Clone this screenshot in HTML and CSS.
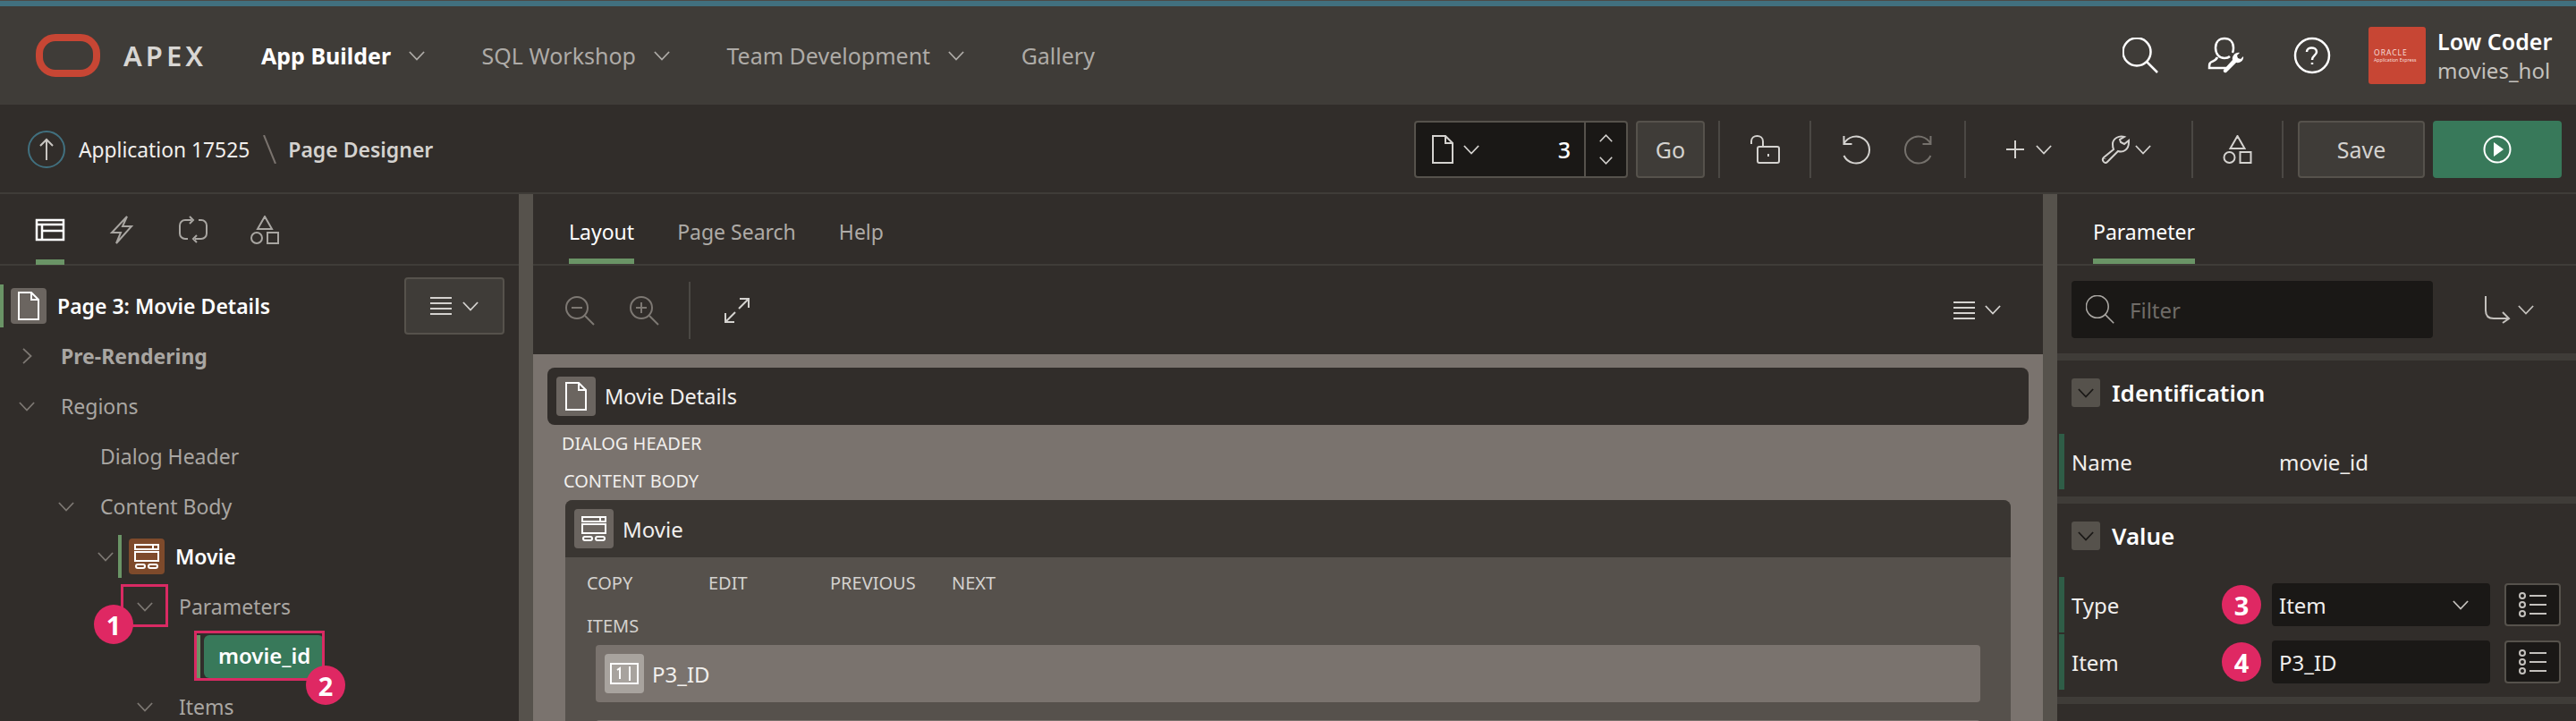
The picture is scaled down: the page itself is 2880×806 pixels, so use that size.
FILE: index.html
```html
<!DOCTYPE html>
<html lang="en">
<head>
    <meta charset="UTF-8">
    <meta name="viewport" content="width=device-width, initial-scale=1.0">
    <title>Page Designer</title>
    <link rel="stylesheet" href="styles.css">
</head>
<body>

<!-- shared icons -->
<svg class="sprite" aria-hidden="true">
    <symbol id="chev" viewBox="0 0 20 12"><path d="M1 1l9 9.500 9-9.500"/></symbol>
    <symbol id="chev-r" viewBox="0 0 12 20"><path d="M1 1l9.500 9-9.500 9"/></symbol>
    <symbol id="page" viewBox="0 0 24 32"><path d="M1 1h14l8 8v22H1zM15 1v8h8"/></symbol>
    <symbol id="shapes" viewBox="0 0 32 32"><path d="M16 1l8 14H8zM1 25a6 6 0 1 0 12 0a6 6 0 1 0-12 0zM19 19h12v12H19z"/></symbol>
    <symbol id="search" viewBox="0 0 40 40"><circle cx="16" cy="16" r="15.500"/><path d="M27 27l12 12"/></symbol>
    <symbol id="menu" viewBox="0 0 24 20"><path d="M0 1h24M0 7h24M0 13h24M0 19h24"/></symbol>
    <symbol id="region" viewBox="0 0 28 28"><path d="M1 1h26v5H1zM21 1v5M1 9h26v10H1zM4 23h6a2 2 0 0 1 0 4H4a2 2 0 0 1 0-4zM18 23h6a2 2 0 0 1 0 4h-6a2 2 0 0 1 0-4z"/></symbol>
    <symbol id="opts" viewBox="0 0 32 28"><circle cx="4" cy="4" r="3"/><circle cx="4" cy="14" r="3"/><circle cx="4" cy="24" r="3"/><path d="M12 4h19M12 14h19M12 24h19"/></symbol>
</svg>

<div class="topline"></div>

<header class="header">
    <svg class="logo" viewBox="0 0 72 48"><rect x="4" y="4" width="64" height="40" rx="18"/></svg>
    <span class="brand">APEX</span>
    <nav class="nav">
        <a class="nav-item active">App Builder <svg class="ico chev"><use href="#chev"/></svg></a>
        <a class="nav-item">SQL Workshop <svg class="ico chev"><use href="#chev"/></svg></a>
        <a class="nav-item">Team Development <svg class="ico chev"><use href="#chev"/></svg></a>
        <a class="nav-item">Gallery</a>
    </nav>
    <div class="head-icons">
        <svg class="ico head-ico"><use href="#search"/></svg>
        <svg class="ico head-ico" viewBox="0 0 40 40">
            <path d="M24 21c-1 1-3 2-6 2c-6 0-10-5-10-11.500C8 5 12 1 18 1s10 4 10 10.500c0 2-.3 4-1 5.500M10 22c-1 3-4 4-7 5.500C1 28.500 1 30 1 34h19"/>
            <path class="solid" d="M35 17l-3 3 1 3 3 1 3-3c1 4-3 8-8 7L20 39c-2 1-4-1-3-3L27 25c-1-4 3-9 8-8z"/>
        </svg>
        <svg class="ico head-ico" viewBox="0 0 40 40"><circle cx="20" cy="20" r="19"/><path d="M14 16c0-6 11-6 11 0c0 4-5 4-5 9M20 28v2"/></svg>
    </div>
    <div class="user">
        <div class="user-tile"><b>ORACLE</b><span>Application Express</span></div>
        <div class="user-text">
            <div class="user-name">Low Coder</div>
            <div class="user-app">movies_hol</div>
        </div>
    </div>
</header>

<div class="crumbbar">
    <svg class="up" viewBox="0 0 42 44"><circle cx="21" cy="22" r="20"/><path class="up-arrow" d="M21 34V11M14 18l7-7 7 7"/></svg>
    <span class="crumb">Application 17525</span>
    <svg class="slash" viewBox="0 0 15 32"><path d="M1 0l13 32"/></svg>
    <span class="crumb strong">Page Designer</span>

    <div class="tools">
        <div class="page-box">
            <svg class="ico page-ico"><use href="#page"/></svg>
            <svg class="ico chev"><use href="#chev"/></svg>
            <span class="page-no">3</span>
            <div class="spin">
                <svg class="ico spin-ico flip"><use href="#chev"/></svg>
                <svg class="ico spin-ico"><use href="#chev"/></svg>
            </div>
        </div>
        <button class="btn go">Go</button>
        <div class="sep"></div>
        <svg class="ico lock" viewBox="0 0 32 32"><path d="M1 10V7c0-8 13-8 13 0v5M10 13h20a2 2 0 0 1 2 2v14a2 2 0 0 1-2 2H10a2 2 0 0 1-2-2V15a2 2 0 0 1 2-2zM20 21v3"/></svg>
        <div class="sep"></div>
        <svg class="ico undo" viewBox="0 0 30 32"><path d="M1.500 1v9h9M1.500 10A15 15 0 1 1 1.500 23"/></svg>
        <svg class="ico undo dim" viewBox="0 0 30 32"><path d="M28.500 1v9h-9M28.500 10A15 15 0 1 0 28.500 23"/></svg>
        <div class="sep"></div>
        <svg class="ico plus" viewBox="0 0 20 20"><path d="M10 0v20M0 10h20"/></svg>
        <svg class="ico chev"><use href="#chev"/></svg>
        <svg class="ico wrench" viewBox="0 0 32 32"><path d="M26 2c-6-2-13 2-13 8c0 2 0 4 1 6L3 25c-3 3 1 8 4 5L19 18c6 2 12-2 12-10V6l-5 4-4-2-1-3zM4.500 26.500v.5"/></svg>
        <svg class="ico chev"><use href="#chev"/></svg>
        <div class="sep"></div>
        <svg class="ico shapes"><use href="#shapes"/></svg>
        <div class="sep"></div>
        <button class="btn save">Save</button>
        <button class="btn run">
            <svg class="run-ico" viewBox="0 0 32 32"><circle cx="16" cy="16" r="14.500"/><path d="M12 8l11 8-11 8z"/></svg>
        </button>
    </div>
</div>

<main class="main">
    <section class="left">
        <div class="tabs icon-tabs">
            <div class="icon-tab on">
                <svg class="ico tab-ico grid" viewBox="0 0 32 24"><path d="M1 1h30v22H1zM1 6h30M7 6v17M7 13h24"/></svg>
            </div>
            <div class="icon-tab">
                <svg class="ico tab-ico bolt" viewBox="0 0 24 32"><path d="M18 1L1 19h10L6 31 23 12H13z"/></svg>
            </div>
            <div class="icon-tab">
                <svg class="ico tab-ico" viewBox="0 0 32 32"><path d="M14 5H7a6 6 0 0 0-6 6v9a6 6 0 0 0 6 6h3M18 26h7a6 6 0 0 0 6-6v-9a6 6 0 0 0-6-6h-3M12 1l4 4-4 4M20 22l-4 4 4 4"/></svg>
            </div>
            <div class="icon-tab">
                <svg class="ico tab-ico"><use href="#shapes"/></svg>
            </div>
        </div>

        <div class="tree">
            <div class="row root">
                <div class="bar"></div>
                <div class="tile"><svg class="ico tile-ico"><use href="#page"/></svg></div>
                <span class="node strong white">Page 3: Movie Details</span>
                <button class="btn tree-menu">
                    <svg class="ico menu-ico"><use href="#menu"/></svg>
                    <svg class="ico chev"><use href="#chev"/></svg>
                </button>
            </div>
            <div class="row d0"><span class="twist"><svg class="ico chev-r"><use href="#chev-r"/></svg></span><span class="node bold">Pre-Rendering</span></div>
            <div class="row d0"><span class="twist"><svg class="ico chev"><use href="#chev"/></svg></span><span class="node">Regions</span></div>
            <div class="row d1"><span class="twist"></span><span class="node">Dialog Header</span></div>
            <div class="row d1"><span class="twist"><svg class="ico chev"><use href="#chev"/></svg></span><span class="node">Content Body</span></div>
            <div class="row d2">
                <span class="twist narrow"><svg class="ico chev"><use href="#chev"/></svg></span>
                <div class="bar"></div>
                <div class="tile brown"><svg class="ico tile-ico region"><use href="#region"/></svg></div>
                <span class="node strong white">Movie</span>
            </div>
            <div class="row d3"><span class="twist"><svg class="ico chev"><use href="#chev"/></svg></span><span class="node">Parameters</span></div>
            <div class="row sel-row">
                <div class="bar short"></div>
                <div class="pill">movie_id</div>
            </div>
            <div class="row d3"><span class="twist"><svg class="ico chev"><use href="#chev"/></svg></span><span class="node">Items</span></div>
        </div>

        <!-- callouts over the tree -->
        <div class="mark mark-1"></div>
        <div class="mark mark-2"></div>
        <div class="badge badge-1">1</div>
        <div class="badge badge-2">2</div>
    </section>

    <div class="split"></div>

    <section class="center">
        <div class="tabs text-tabs">
            <div class="text-tab on">Layout</div>
            <div class="text-tab">Page Search</div>
            <div class="text-tab">Help</div>
        </div>
        <div class="canvas-bar">
            <svg class="ico zoom" viewBox="0 0 32 32"><circle cx="13" cy="13" r="12"/><path d="M22 22l10 10M7 13h12"/></svg>
            <svg class="ico zoom" viewBox="0 0 32 32"><circle cx="13" cy="13" r="12"/><path d="M22 22l10 10M7 13h12M13 7v12"/></svg>
            <div class="sep"></div>
            <svg class="ico expand" viewBox="0 0 28 28"><path d="M17 1h10v10M27 1L16 12M11 27H1V17M1 27l11-11"/></svg>
            <div class="bar-end">
                <svg class="ico menu-ico"><use href="#menu"/></svg>
                <svg class="ico chev"><use href="#chev"/></svg>
            </div>
        </div>
        <div class="canvas">
            <div class="page-head">
                <div class="tile tile-sm"><svg class="ico tile-ico"><use href="#page"/></svg></div>
                <span>Movie Details</span>
            </div>
            <div class="slot slot-a">DIALOG HEADER</div>
            <div class="slot slot-b">CONTENT BODY</div>
            <div class="card">
                <div class="card-head">
                    <div class="tile tile-sm"><svg class="ico tile-ico region"><use href="#region"/></svg></div>
                    <span>Movie</span>
                </div>
                <div class="actions">
                    <span>COPY</span><span>EDIT</span><span>PREVIOUS</span><span>NEXT</span>
                </div>
                <div class="items-label">ITEMS</div>
                <div class="item">
                    <div class="tile tile-sm tile-light">
                        <svg class="ico tile-ico field" viewBox="0 0 32 24"><path d="M1 1h30v22H1zM22 4v16M8 8l3-2v12"/></svg>
                    </div>
                    <span>P3_ID</span>
                </div>
                <div class="item"></div>
            </div>
        </div>
    </section>

    <div class="split"></div>

    <section class="right">
        <div class="tabs text-tabs prop-tabs">
            <div class="text-tab on">Parameter</div>
        </div>
        <div class="filter-bar">
            <div class="filter">
                <svg class="ico filter-ico"><use href="#search"/></svg>
                <span>Filter</span>
            </div>
            <svg class="ico goto" viewBox="0 0 28 32"><path d="M1 1v16c0 7 4 9 9 9h17M20 19l7 7-7 5"/></svg>
            <svg class="ico chev"><use href="#chev"/></svg>
        </div>
        <div class="group">
            <div class="group-head">
                <span class="toggle"><svg class="ico chev"><use href="#chev"/></svg></span>
                <h2>Identification</h2>
            </div>
            <div class="prop">
                <div class="prop-bar"></div>
                <span class="prop-label">Name</span>
                <span class="prop-value">movie_id</span>
            </div>
        </div>
        <div class="group">
            <div class="group-head">
                <span class="toggle"><svg class="ico chev"><use href="#chev"/></svg></span>
                <h2>Value</h2>
            </div>
            <div class="prop">
                <div class="prop-bar"></div>
                <span class="prop-label short">Type</span>
                <div class="badge inline">3</div>
                <div class="field-box">Item <svg class="ico chev"><use href="#chev"/></svg></div>
                <div class="opts"><svg class="ico opts-ico"><use href="#opts"/></svg></div>
            </div>
            <div class="prop">
                <div class="prop-bar"></div>
                <span class="prop-label short">Item</span>
                <div class="badge inline">4</div>
                <div class="field-box">P3_ID</div>
                <div class="opts"><svg class="ico opts-ico"><use href="#opts"/></svg></div>
            </div>
        </div>
        <div class="group"></div>
    </section>
</main>

</body>
</html>
```

FILE: styles.css
```css
* {
    box-sizing: border-box;
}

html, body {
    height: 100%;
}

body {
    margin: 0;
    height: 806px;
    overflow: hidden;
    background: #312d2a;
    color: #f1efed;
    font-family: "Noto Sans", sans-serif;
    font-size: 24px;
}

.sprite {
    display: none;
}

.ico {
    display: block;
    flex: none;
    fill: none;
    stroke: currentColor;
    stroke-width: 2;
    overflow: visible;
}

.chev {
    width: 18px;
    height: 11px;
}

.chev-r {
    width: 11px;
    height: 18px;
}

.strong {
    font-weight: 600;
}

.bold {
    font-weight: 700;
}

.white {
    color: #fff;
}

.topline {
    height: 7px;
    background: #41707f;
    border-top: 1px solid #4d4a46;
}

/* header */
.header {
    display: flex;
    align-items: center;
    height: 110px;
    background: #3f3c38;
    padding-left: 40px;
}

.logo {
    width: 72px;
    height: 48px;
    fill: none;
    stroke: #c74634;
    stroke-width: 8;
}

.brand {
    margin-left: 26px;
    width: 90px;
    font-size: 31px;
    font-weight: 600;
    letter-spacing: 4px;
    white-space: nowrap;
    color: #d8d6d3;
}

.nav {
    display: flex;
    margin-left: 64px;
    font-size: 25px;
}

.nav-item {
    display: flex;
    align-items: center;
    gap: 20px;
    margin-right: 63.500px;
    color: #aeaba7;
}

.nav-item .chev {
    color: #aeaba7;
}

.nav-item.active {
    color: #fff;
    font-weight: 700;
}

.head-icons {
    display: flex;
    gap: 56px;
    margin-left: auto;
    color: #fff;
}

.head-ico {
    width: 40px;
    height: 40px;
    stroke-width: 2.500;
}

.solid {
    fill: currentColor;
    stroke: none;
}

.user {
    display: flex;
    align-items: center;
    margin-left: 43px;
    margin-right: 29px;
}

.user-tile {
    display: flex;
    flex-direction: column;
    justify-content: center;
    width: 64px;
    height: 64px;
    padding-left: 6px;
    background: #c74634;
    border-radius: 3px;
    color: #f6dfda;
    white-space: nowrap;
}

.user-tile b {
    font-size: 8.500px;
    font-weight: 400;
    letter-spacing: 1px;
    line-height: 9px;
}

.user-tile span {
    font-size: 5.200px;
    line-height: 8px;
}

.user-text {
    margin-left: 13px;
    width: 126px;
}

.user-name {
    color: #fff;
    font-size: 25px;
    font-weight: 600;
    line-height: 34px;
    white-space: nowrap;
}

.user-app {
    color: #c4c1bd;
    line-height: 32px;
}

/* breadcrumb and toolbar */
.crumbbar {
    display: flex;
    align-items: center;
    height: 100px;
    padding: 2px 16px 0 31px;
    border-bottom: 2px solid #3f3c38;
    font-size: 25px;
}

.up {
    width: 42px;
    height: 44px;
    fill: none;
    stroke: #41707f;
    stroke-width: 2;
}

.up-arrow {
    stroke: #c9c6c2;
}

.crumb {
    margin-left: 15px;
    font-size: 22.800px;
}

.crumb.strong {
    margin-left: 13px;
    font-size: 23px;
    color: #d4d2cf;
}

.slash {
    width: 15px;
    height: 32px;
    margin-left: 15px;
    stroke: #7a736e;
    stroke-width: 2;
}

.tools {
    display: flex;
    align-items: center;
    margin-left: auto;
    height: 64px;
    color: #d4d2cf;
}

.sep {
    flex: none;
    width: 2px;
    height: 64px;
    background: #4b4844;
}

.btn {
    font: inherit;
    color: inherit;
    background: #3f3c38;
    border: 2px solid #56524c;
    border-radius: 4px;
    cursor: pointer;
}

.page-box {
    display: flex;
    align-items: center;
    width: 239px;
    height: 64px;
    padding-left: 18px;
    background: #1a1816;
    border: 2px solid #56524c;
    border-radius: 4px;
}

.page-ico {
    width: 24px;
    height: 32px;
    margin-right: 11px;
}

.page-no {
    margin-left: auto;
    margin-right: 15px;
    color: #fff;
    font-weight: 500;
}

.spin {
    display: flex;
    flex-direction: column;
    align-items: center;
    justify-content: space-between;
    width: 47px;
    height: 100%;
    padding: 13px 0;
    border-left: 2px solid #56524c;
}

.spin-ico {
    width: 15px;
    height: 9px;
}

.flip {
    transform: rotate(180deg);
}

.go {
    width: 77px;
    height: 64px;
    margin: 0 15px 0 9px;
    padding: 0;
}

.lock {
    width: 32px;
    height: 32px;
    margin: 0 34px;
}

.undo {
    width: 30px;
    height: 32px;
    margin-left: 35px;
}

.undo.dim {
    margin: 0 36px 0 40px;
    color: #75716c;
}

.plus {
    width: 20px;
    height: 20px;
    margin-left: 45px;
    margin-right: 13px;
}

.wrench {
    width: 32px;
    height: 32px;
    margin-left: 55px;
    margin-right: 6px;
}

.wrench + .chev {
    margin-right: 45px;
}

.shapes {
    width: 33px;
    height: 32px;
    margin: 0 33px;
}

.save {
    width: 142px;
    height: 64px;
    margin-left: 16px;
}

.run {
    display: flex;
    align-items: center;
    justify-content: center;
    width: 144px;
    height: 64px;
    margin-left: 9px;
    background: #38795a;
    border: 0;
}

.run-ico {
    width: 32px;
    height: 32px;
    fill: none;
    stroke: #fff;
    stroke-width: 2;
}

.run-ico path {
    fill: #fff;
    stroke: none;
}

/* panels */
.main {
    display: flex;
    height: 589px;
    overflow: hidden;
}

.left, .right {
    position: relative;
    width: 580px;
    flex: none;
    overflow: hidden;
}

.split {
    flex: none;
    width: 16px;
    background: #56524c;
}

.center {
    flex: 1;
    min-width: 0;
    display: flex;
    flex-direction: column;
}

.tabs {
    display: flex;
    flex: none;
    height: 80px;
    border-bottom: 2px solid #3f3c38;
}

.icon-tabs {
    gap: 48px;
    padding-left: 40px;
}

.icon-tab {
    display: flex;
    align-items: center;
    justify-content: center;
    width: 32px;
    height: 79px;
    color: #a9a6a2;
}

.icon-tab.on, .text-tab.on {
    color: #fff;
    box-shadow: inset 0 -6px 0 #6a9466;
}

.tab-ico {
    width: 32px;
    height: 32px;
}

.tab-ico.grid {
    height: 24px;
    stroke-width: 2.500;
}

.tab-ico.bolt {
    width: 24px;
}

.text-tabs {
    gap: 48px;
    padding-left: 40px;
    font-size: 23px;
}

.prop-tabs {
    padding-left: 40px;
}

.text-tab {
    height: 78px;
    line-height: 84px;
    color: #aeaba7;
}

/* tree */
.tree {
    padding-top: 17px;
    font-size: 23px;
}

.row {
    display: flex;
    align-items: center;
    height: 56px;
    white-space: nowrap;
}

.node {
    color: #a9a6a2;
}

.node.white {
    color: #fff;
}

.d0 { padding-left: 16px; }
.d1 { padding-left: 60px; }
.d2 { padding-left: 104px; }
.d3 { padding-left: 148px; }

.twist {
    display: flex;
    justify-content: center;
    flex: none;
    width: 28px;
    margin-right: 24px;
    color: #7d7873;
}

.twist.narrow {
    margin-right: 0;
}

.bar {
    flex: none;
    width: 4px;
    height: 48px;
    background: #6a9466;
}

.tile {
    display: flex;
    align-items: center;
    justify-content: center;
    flex: none;
    width: 40px;
    height: 40px;
    margin: 0 12px 0 8px;
    background: #6b6560;
    border-radius: 4px;
    color: #fff;
}

.tile.brown {
    background: #7e4a2b;
}

.tile-ico {
    width: 24px;
    height: 32px;
}

.tile-ico.region {
    width: 28px;
    height: 28px;
}

.tile-ico.field {
    width: 32px;
    height: 24px;
}

.tile-sm {
    width: 44px;
    height: 44px;
    margin: 0 10px;
}

.tile-light {
    background: #a8a39e;
}

.tree-menu {
    display: flex;
    align-items: center;
    justify-content: center;
    gap: 12px;
    width: 112px;
    height: 64px;
    margin-left: auto;
    margin-right: 16px;
    color: #d4d2cf;
}

.menu-ico {
    width: 24px;
    height: 20px;
}

.sel-row {
    padding-left: 220px;
}

.pill {
    width: 134px;
    height: 48px;
    margin-left: 4px;
    padding-left: 16px;
    line-height: 46px;
    background: #38795a;
    border-radius: 6px;
    color: #fff;
    font-size: 24px;
    font-weight: 600;
}

.mark {
    position: absolute;
    border: 3px solid #d92a63;
}

.mark-1 {
    left: 135px;
    top: 436px;
    width: 53px;
    height: 48px;
}

.mark-2 {
    left: 217px;
    top: 488px;
    width: 146px;
    height: 56px;
}

.badge {
    display: flex;
    align-items: center;
    justify-content: center;
    flex: none;
    width: 44px;
    height: 44px;
    border-radius: 50%;
    background: #df2863;
    color: #fff;
    font-size: 29px;
    font-weight: 700;
}

.badge-1, .badge-2 {
    position: absolute;
}

.badge-1 {
    left: 105px;
    top: 459px;
}

.badge-2 {
    left: 342px;
    top: 527px;
}

/* canvas */
.canvas-bar {
    display: flex;
    align-items: center;
    flex: none;
    gap: 40px;
    height: 99px;
    padding: 0 47px 0 36px;
    color: #7d7873;
}

.canvas-bar .sep {
    margin-left: -6px;
}

.zoom {
    width: 32px;
    height: 32px;
}

.expand {
    width: 28px;
    height: 28px;
    margin-left: -2px;
    color: #d4d2cf;
}

.bar-end {
    display: flex;
    align-items: center;
    gap: 11px;
    margin-left: auto;
    color: #d4d2cf;
}

.canvas {
    flex: 1;
    min-height: 0;
    overflow: hidden;
    padding: 15px 16px 0;
    background: #7a736e;
}

.page-head {
    display: flex;
    align-items: center;
    height: 64px;
    background: #312d2a;
    border-radius: 8px;
    font-size: 23.500px;
}

.slot {
    height: 42px;
    line-height: 42px;
    font-size: 20px;
}

.slot-a {
    padding-left: 16px;
}

.slot-b {
    padding-left: 18px;
}

.card {
    margin: 0 20px;
    background: #56514c;
    border-radius: 8px 8px 0 0;
}

.card-head {
    display: flex;
    align-items: center;
    height: 64px;
    background: #3a3632;
    border-radius: 8px 8px 0 0;
}

.actions {
    display: flex;
    height: 58px;
    line-height: 58px;
    padding-left: 24px;
    font-size: 20px;
    color: #d4d2cf;
}

.actions span {
    width: 136px;
}

.items-label {
    height: 40px;
    padding-left: 24px;
    line-height: 38px;
    font-size: 20px;
    color: #d4d2cf;
}

.item {
    display: flex;
    align-items: center;
    height: 64px;
    margin: 0 34px 20px;
    background: #7a736e;
    border-radius: 4px;
}

.item .tile {
    margin-right: 9px;
}

/* property editor */
.filter-bar {
    display: flex;
    align-items: center;
    height: 98px;
    padding-left: 16px;
    color: #c4c1bd;
}

.filter {
    display: flex;
    align-items: center;
    width: 404px;
    height: 64px;
    margin-right: 58px;
    padding-left: 16px;
    background: #1a1816;
    border-radius: 4px;
    color: #6f6b67;
}

.filter-ico {
    width: 32px;
    height: 32px;
    margin-right: 17px;
    color: #a9a6a2;
}

.goto {
    width: 28px;
    height: 32px;
    margin-right: 9px;
}

.group {
    border-top: 8px solid #3f3c38;
    padding-bottom: 8px;
}

.group-head {
    display: flex;
    align-items: center;
    height: 82px;
    padding: 0 16px 10px;
}

.group-head h2 {
    margin: 0 0 0 13px;
    font-size: 26px;
    font-weight: 600;
    color: #fff;
}

.toggle {
    display: flex;
    align-items: center;
    justify-content: center;
    width: 32px;
    height: 32px;
    background: #56524c;
    border-radius: 3px;
    color: #1a1816;
}

.prop {
    display: flex;
    align-items: center;
    height: 62px;
    padding-left: 2px;
}

.prop + .prop {
    margin-top: 2px;
}

.prop-bar {
    align-self: stretch;
    flex: none;
    width: 6px;
    background: #2f5d47;
}

.prop-label {
    width: 232px;
    margin-left: 8px;
}

.prop-label.short {
    width: 168px;
}

.prop-value {
    color: #f1efed;
}

.badge.inline {
    margin-right: 12px;
}

.field-box {
    display: flex;
    align-items: center;
    justify-content: space-between;
    width: 244px;
    height: 48px;
    padding: 0 24px 0 8px;
    background: #1a1816;
    border-radius: 4px;
    color: #f1efed;
}

.field-box .chev {
    color: #c4c1bd;
}

.opts {
    display: flex;
    align-items: center;
    justify-content: center;
    width: 63px;
    height: 48px;
    margin-left: 16px;
    background: #1a1816;
    border: 2px solid #56524c;
    border-radius: 4px;
    color: #c4c1bd;
}

.opts-ico {
    width: 32px;
    height: 28px;
}
```
